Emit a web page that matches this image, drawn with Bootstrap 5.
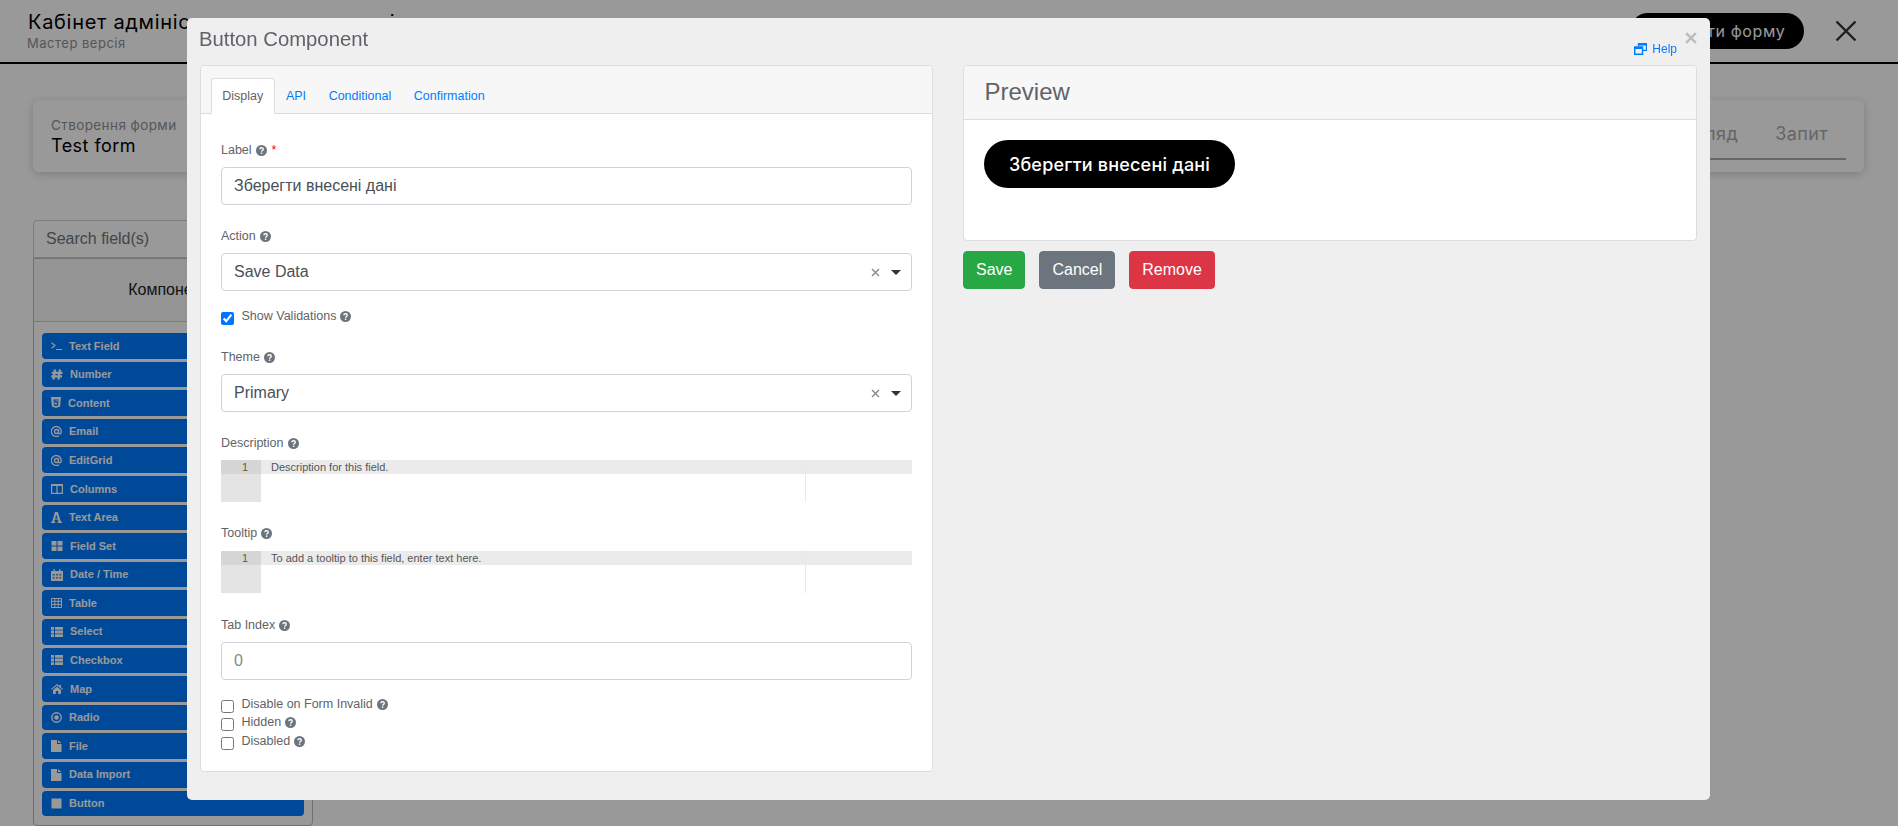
<!DOCTYPE html>
<html lang="uk">
<head>
<meta charset="utf-8">
<title>Button Component</title>
<link rel="stylesheet" href="https://cdn.jsdelivr.net/npm/bootstrap@5.3.0/dist/css/bootstrap.min.css">
<style>
html,body{height:100%;overflow:hidden;background:#fff;font-family:"Liberation Sans",Arial,sans-serif;}
.ui-font{font-family:Inter,"Noto Sans",sans-serif;}
.top-bar{height:64px;border-bottom:2px solid #000;padding:0 41px 0 27px;}
.app-title{font-size:20px;line-height:24px;color:#000;letter-spacing:.7px;margin-left:1px;}
.app-sub{font-size:13px;line-height:18px;color:#909090;letter-spacing:.5px;}
.top-save{height:36px;width:174px;border-radius:18px;background:#000;color:#fff;font-size:16px;line-height:36px;text-align:center;letter-spacing:.6px;}
.top-x{margin-left:31px;}
.page-wrap{padding:36px 34px 0 33px;}
.form-head{height:72px;border-radius:6px;box-shadow:0 2px 8px rgba(0,0,0,.18);padding:16px 18px 0 18px;margin-bottom:48px;background:#fff;}
.form-cap{font-size:13.500px;line-height:18px;color:#909090;letter-spacing:.4px;}
.form-name{font-size:18px;line-height:24px;color:#000;letter-spacing:.45px;}
.head-tabs{height:44px;border-bottom:2px solid #aaa;color:#aaa;font-size:18px;letter-spacing:.4px;gap:37px;padding:4px 18px 0 20px;}
.side-col{width:280px;}
.side-search{height:38px;border:1px solid #ced4da;border-radius:4px 4px 0 0;padding:0 12px;font-size:16px;line-height:36px;color:#6c757d;}
.side-panel{border:1px solid #bbb;border-radius:0 0 4px 4px;height:568px;padding-bottom:8px;}
.side-head{height:63px;background:#f7f7f7;border-bottom:1px solid #ccc;text-align:center;line-height:61px;font-size:16px;color:#222;margin-bottom:11px;}
.comp-btn{height:25.6px;margin:0 8px 3px 8px;padding-left:9px;background:#007bff;color:#fff;border-radius:4px;font-size:11px;font-weight:700;gap:7px;}
.comp-btn svg{fill:#fff;flex:none;}
.cal-cell{fill:#004a99;opacity:.7;}
.modal-backdrop.bg-soft{opacity:.4;}
.dlg.modal-dialog{width:1523px;max-width:1523px;margin:18px 0 0 187px;}
.dlg .modal-content{background:#efefef;border:0;border-radius:5px;height:782px;padding:0 13px;}
.dlg-head{height:47px;position:relative;}
.dlg-title{font-size:20.300px;line-height:28px;color:#5f6368;margin:7px 0 0 -1px;font-weight:400;}
.dlg-close{position:absolute;right:0;top:14px;width:12px;height:12px;}
.dlg-help{position:absolute;right:20px;top:24px;font-size:12px;line-height:14px;color:#007bff;gap:5px;text-decoration:none;}
.cols{gap:30px;}
.pane-l{width:733px;height:707px;border:1px solid #ddd;border-radius:4px;background:#fff;}
.pane-r{width:734px;}
.tabs-band{height:48px;background:#f7f7f7;border-bottom:1px solid #ddd;padding:12px 0 0 10px;border-radius:4px 4px 0 0;}
.tabs-band .nav-link{font-size:12.500px;line-height:19.2px;padding:8px 10.3px 6px;color:#007bff;border:1px solid transparent;border-radius:4px 4px 0 0;height:36px;}
.tabs-band .nav-link.active{color:#5f6368;background:#fff;border-color:#ddd #ddd #fff;}
.tabs-band .nav-tabs{border:0;}
.form-pane{padding:26px 20px 0 20px;}
.fld{margin-bottom:21px;}
.fld-tip{margin-bottom:22px;}
.fld-lab{font-size:12.500px;line-height:19.2px;padding-top:1px;margin-bottom:7px;color:#5f6368;display:flex;align-items:center;gap:4px;}
.req{color:#f00;margin-left:1px;}
.q{width:11px;height:11px;flex:none;}
.q-chk{margin-top:3px;}
.ctl{height:38px;border:1px solid #ced4da;border-radius:4px;padding:0 11px 0 12px;font-size:16px;color:#495057;background:#fff;line-height:36px;}
.ctl.form-control{line-height:1.5;padding:6px 12px;}
.ctl.form-control::placeholder{color:#888;}
.caret{width:0;height:0;border:5px solid transparent;border-top-color:#333;border-bottom:0;margin-left:11px;margin-right:-1px;}
.chk-row{font-size:12.500px;line-height:16.9px;padding-top:1.5px;color:#5f6368;gap:4px;}
.chk-row input{width:13px;height:13px;margin:4px 3.5px 0 0;flex:none;}
.chk-first{margin-top:15px;margin-bottom:22px;}
.chk-last{margin-top:14.6px;}
.ace-box{height:42px;position:relative;}
.ace-gut{width:40px;background:#e4e4e4;flex:none;font-size:11px;line-height:14px;}
.ace-num{background:#d6d6d6;height:14px;text-align:right;padding-right:13px;color:#6b5a30;}
.ace-line{height:14px;background:#ebebeb;font-size:11px;line-height:14px;color:#555;padding-left:10px;}
.ace-margin{position:absolute;left:584px;top:0;bottom:0;width:1px;background:#e8e8e8;}
.prev-card{height:176px;border:1px solid #ddd;border-radius:4px;background:#fff;margin-bottom:10px;}
.prev-head{height:53.5px;background:#f7f7f7;border-bottom:1px solid #ddd;padding:0 20.5px;font-size:24px;line-height:52px;color:#5f6368;border-radius:4px 4px 0 0;}
.prev-body{padding:20.5px 20px;}
.prev-btn{width:251px;height:48px;border:0;border-radius:24px;background:#000;color:#fff;font-size:18px;font-weight:500;letter-spacing:.2px;padding:0;}
.act-btns{gap:14px;}
.act-btns .btn{height:38px;font-size:16px;line-height:24px;padding:6px 12px;border-radius:4px;}
.btn-save{background:#28a745;border-color:#28a745;}
</style>
</head>
<body>
<svg width="0" height="0" class="d-block" aria-hidden="true">
<defs>
<symbol id="i-q" viewBox="0 0 12 12"><circle cx="6" cy="6" r="6" fill="#6c757d"/><path d="M4.1 4.7C4.2 3.6 5 3 6 3c1.100 0 2 .7 2 1.700 0 1.400-1.900 1.400-1.900 2.700" fill="none" stroke="#fff" stroke-width="1.400"/><rect x="5.300" y="8.200" width="1.600" height="1.500" fill="#fff"/></symbol>
</defs>
</svg>

<div class="top-bar d-flex align-items-center justify-content-between ui-font">
  <div>
    <div class="app-title">Кабінет адміністратора регламентів</div>
    <div class="app-sub">Мастер версія</div>
  </div>
  <div class="d-flex align-items-center">
    <div class="top-save">Зберегти форму</div>
    <svg class="top-x" width="22" height="22" viewBox="0 0 22 22"><path d="M1.500 1.500l19 19M20.500 1.500l-19 19" stroke="#333" stroke-width="2.400" fill="none"/></svg>
  </div>
</div>

<div class="page-wrap">
  <div class="form-head d-flex justify-content-between ui-font">
    <div>
      <div class="form-cap">Створення форми</div>
      <div class="form-name">Test form</div>
    </div>
    <div class="head-tabs d-flex"><span>Перегляд</span><span>Запит</span></div>
  </div>
  <div class="side-col">
    <div class="side-search">Search field(s)</div>
    <div class="side-panel">
      <div class="side-head">Компоненти</div>
      <div class="comp-btn d-flex align-items-center"><svg width="11" height="10" viewBox="0 0 11 10"><path d="M.5 1.800L4 4.500.5 7.200M5 8.500h6" fill="none" stroke="#fff" stroke-width="1.200"/></svg>Text Field</div>
      <div class="comp-btn d-flex align-items-center"><svg width="12" height="11" viewBox="0 0 12 11"><path d="M4 .5L2.500 10.500M9 .5L7.500 10.500M.8 3.800h10.700M.3 7.400h10.700" fill="none" stroke="#fff" stroke-width="2.300"/></svg>Number</div>
      <div class="comp-btn d-flex align-items-center"><svg width="10" height="11" viewBox="0 0 10 11"><path d="M0 0h10l-.9 9.500L5 11 .9 9.500zM2.500 2.500l.3 3.300h3.300l-.1 1.500-1 .4-1-.4-.1-.6H2.700l.2 1.800L5 9.200l2.100-.7.400-4.300H4.200l-.1-.7h3.600l.1-1z" fill-rule="evenodd"/></svg>Content</div>
      <div class="comp-btn d-flex align-items-center"><svg width="11" height="11" viewBox="0 0 11 11"><path d="M8 9.700A5 5 0 1 1 10.300 5.500c0 1.500-.8 2.300-1.700 2.300-.7 0-1.100-.4-1.100-1.100V3.300M7.500 5.500a2 2 0 1 1-4 0 2 2 0 0 1 4 0z" fill="none" stroke="#fff" stroke-width="1.300"/></svg>Email</div>
      <div class="comp-btn d-flex align-items-center"><svg width="11" height="11" viewBox="0 0 11 11"><path d="M8 9.700A5 5 0 1 1 10.300 5.500c0 1.500-.8 2.300-1.700 2.300-.7 0-1.100-.4-1.100-1.100V3.300M7.500 5.500a2 2 0 1 1-4 0 2 2 0 0 1 4 0z" fill="none" stroke="#fff" stroke-width="1.300"/></svg>EditGrid</div>
      <div class="comp-btn d-flex align-items-center"><svg width="12" height="10" viewBox="0 0 12 10"><path d="M.6.600h10.800v8.800H.6zM6 .6v8.800" fill="none" stroke="#fff" stroke-width="1.200"/><path d="M.6.600h10.800v1.400H.6z"/></svg>Columns</div>
      <div class="comp-btn d-flex align-items-center"><svg width="11" height="11" viewBox="0 0 11 11"><path d="M4 0h2.800l3 9.400 1.200.4V11H6.500V9.800l1-.4-.5-1.800H3.700l-.5 1.800 1 .4V11H0V9.800l1.200-.4zM5.300 2.400L4 6.400h2.700z" fill-rule="evenodd"/></svg>Text Area</div>
      <div class="comp-btn d-flex align-items-center"><svg width="12" height="10" viewBox="0 0 12 10"><path d="M.5 0h5v4.400h-5zM6.500 0h5v4.400h-5zM.5 5.600h5V10h-5zM6.500 5.600h5V10h-5z"/></svg>Field Set</div>
      <div class="comp-btn d-flex align-items-center"><svg width="12" height="12" viewBox="0 0 12 12"><path d="M0 2h2.500V.3h1.500V2h4V.3h1.500V2H12v10H0z"/><path class="cal-cell" d="M1.800 5h1.800v1.500H1.800zM5.100 5h1.800v1.500H5.100zM8.400 5h1.800v1.500H8.400zM1.800 8h1.800v1.500H1.800zM5.100 8h1.800v1.500H5.100zM8.400 8h1.800v1.500H8.400z"/></svg>Date / Time</div>
      <div class="comp-btn d-flex align-items-center"><svg width="11" height="10" viewBox="0 0 11 10"><path d="M.5.500h10v9H.5zM.5 3.300h10M.5 6.400h10M3.800.5v9M7.200.5v9" fill="none" stroke="#fff"/></svg>Table</div>
      <div class="comp-btn d-flex align-items-center"><svg width="12" height="10" viewBox="0 0 12 10"><path d="M0 0h3v2.800H0zM4 0h8v2.800H4zM0 3.600h3v2.800H0zM4 3.600h8v2.800H4zM0 7.200h3V10H0zM4 7.200h8V10H4z"/></svg>Select</div>
      <div class="comp-btn d-flex align-items-center"><svg width="12" height="10" viewBox="0 0 12 10"><path d="M0 0h3v2.800H0zM4 0h8v2.800H4zM0 3.600h3v2.800H0zM4 3.600h8v2.800H4zM0 7.200h3V10H0zM4 7.200h8V10H4z"/></svg>Checkbox</div>
      <div class="comp-btn d-flex align-items-center"><svg width="12" height="10" viewBox="0 0 12 10"><path d="M6 0l2.500 2.100V.8h1.400v2.500L12 5l-.6.700L6 1.400.6 5.700 0 5zM2 6l4-3.200L10 6v4H7.200V7H4.800v3H2z"/></svg>Map</div>
      <div class="comp-btn d-flex align-items-center"><svg width="11" height="11" viewBox="0 0 11 11"><circle cx="5.500" cy="5.500" r="4.700" fill="none" stroke="#fff" stroke-width="1.400"/><circle cx="5.500" cy="5.500" r="2.300"/></svg>Radio</div>
      <div class="comp-btn d-flex align-items-center"><svg width="11" height="12" viewBox="0 0 11 12"><path d="M0 0h6v4h4.500v8H0zM7 0l3.500 3H7z"/></svg>File</div>
      <div class="comp-btn d-flex align-items-center"><svg width="11" height="12" viewBox="0 0 11 12"><path d="M0 0h6v4h4.500v8H0zM7 0l3.500 3H7z"/></svg>Data Import</div>
      <div class="comp-btn d-flex align-items-center"><svg width="11" height="11" viewBox="0 0 11 11"><path d="M.5.500h10v10H.5z"/></svg>Button</div>
    </div>
  </div>
</div>

<div class="modal-backdrop bg-soft"></div>

<div class="modal d-block">
  <div class="modal-dialog dlg">
    <div class="modal-content">
      <div class="dlg-head">
        <h5 class="dlg-title">Button Component</h5>
        <svg class="dlg-close" viewBox="0 0 12 12"><path d="M1.200 1.200l9.600 9.600M10.800 1.200l-9.600 9.600" stroke="#bdbdbd" stroke-width="2.600" fill="none"/></svg>
        <a class="dlg-help d-flex align-items-center" href="#"><svg width="13" height="12" viewBox="0 0 13 12"><path d="M4.500 3V.7h8v6.600H8.500" fill="none" stroke="#007bff" stroke-width="1.300"/><path d="M.7 4h7.800v7.300H.7z" fill="none" stroke="#007bff" stroke-width="1.400"/><path d="M.7 4h7.800v2H.7zM4.500.7h8v1.800h-8z" fill="#007bff"/></svg>Help</a>
      </div>
      <div class="cols d-flex">
        <div class="pane-l">
          <div class="tabs-band">
            <ul class="nav nav-tabs">
              <li class="nav-item"><a class="nav-link active" href="#">Display</a></li>
              <li class="nav-item"><a class="nav-link" href="#">API</a></li>
              <li class="nav-item"><a class="nav-link" href="#">Conditional</a></li>
              <li class="nav-item"><a class="nav-link" href="#">Confirmation</a></li>
            </ul>
          </div>
          <div class="form-pane">
            <div class="fld">
              <label class="fld-lab">Label <svg class="q"><use href="#i-q"/></svg><span class="req">*</span></label>
              <input class="ctl form-control" value="Зберегти внесені дані">
            </div>
            <div>
              <label class="fld-lab">Action <svg class="q"><use href="#i-q"/></svg></label>
              <div class="ctl d-flex align-items-center justify-content-between"><span>Save Data</span><span class="d-flex align-items-center"><svg width="9" height="9" viewBox="0 0 9 9"><path d="M1 1l7 7M8 1L1 8" stroke="#888" stroke-width="1.400" fill="none"/></svg><span class="caret"></span></span></div>
            </div>
            <div class="chk-row chk-first d-flex"><input type="checkbox" checked>Show Validations <svg class="q q-chk"><use href="#i-q"/></svg></div>
            <div class="fld">
              <label class="fld-lab">Theme <svg class="q"><use href="#i-q"/></svg></label>
              <div class="ctl d-flex align-items-center justify-content-between"><span>Primary</span><span class="d-flex align-items-center"><svg width="9" height="9" viewBox="0 0 9 9"><path d="M1 1l7 7M8 1L1 8" stroke="#888" stroke-width="1.400" fill="none"/></svg><span class="caret"></span></span></div>
            </div>
            <div class="fld">
              <label class="fld-lab">Description <svg class="q"><use href="#i-q"/></svg></label>
              <div class="ace-box d-flex">
                <div class="ace-gut"><div class="ace-num">1</div></div>
                <div class="flex-grow-1"><div class="ace-line">Description for this field.</div></div>
                <div class="ace-margin"></div>
              </div>
            </div>
            <div class="fld fld-tip">
              <label class="fld-lab">Tooltip <svg class="q"><use href="#i-q"/></svg></label>
              <div class="ace-box d-flex">
                <div class="ace-gut"><div class="ace-num">1</div></div>
                <div class="flex-grow-1"><div class="ace-line">To add a tooltip to this field, enter text here.</div></div>
                <div class="ace-margin"></div>
              </div>
            </div>
            <div>
              <label class="fld-lab">Tab Index <svg class="q"><use href="#i-q"/></svg></label>
              <input class="ctl form-control" placeholder="0">
            </div>
            <div class="chk-last">
              <div class="chk-row d-flex"><input type="checkbox">Disable on Form Invalid <svg class="q q-chk"><use href="#i-q"/></svg></div>
              <div class="chk-row d-flex"><input type="checkbox">Hidden <svg class="q q-chk"><use href="#i-q"/></svg></div>
              <div class="chk-row d-flex"><input type="checkbox">Disabled <svg class="q q-chk"><use href="#i-q"/></svg></div>
            </div>
          </div>
        </div>
        <div class="pane-r">
          <div class="prev-card">
            <div class="prev-head">Preview</div>
            <div class="prev-body"><button class="prev-btn ui-font">Зберегти внесені дані</button></div>
          </div>
          <div class="act-btns d-flex">
            <button class="btn btn-success btn-save">Save</button>
            <button class="btn btn-secondary">Cancel</button>
            <button class="btn btn-danger">Remove</button>
          </div>
        </div>
      </div>
    </div>
  </div>
</div>
<script src="https://cdn.jsdelivr.net/npm/bootstrap@5.3.0/dist/js/bootstrap.bundle.min.js"></script>
</body>
</html>
